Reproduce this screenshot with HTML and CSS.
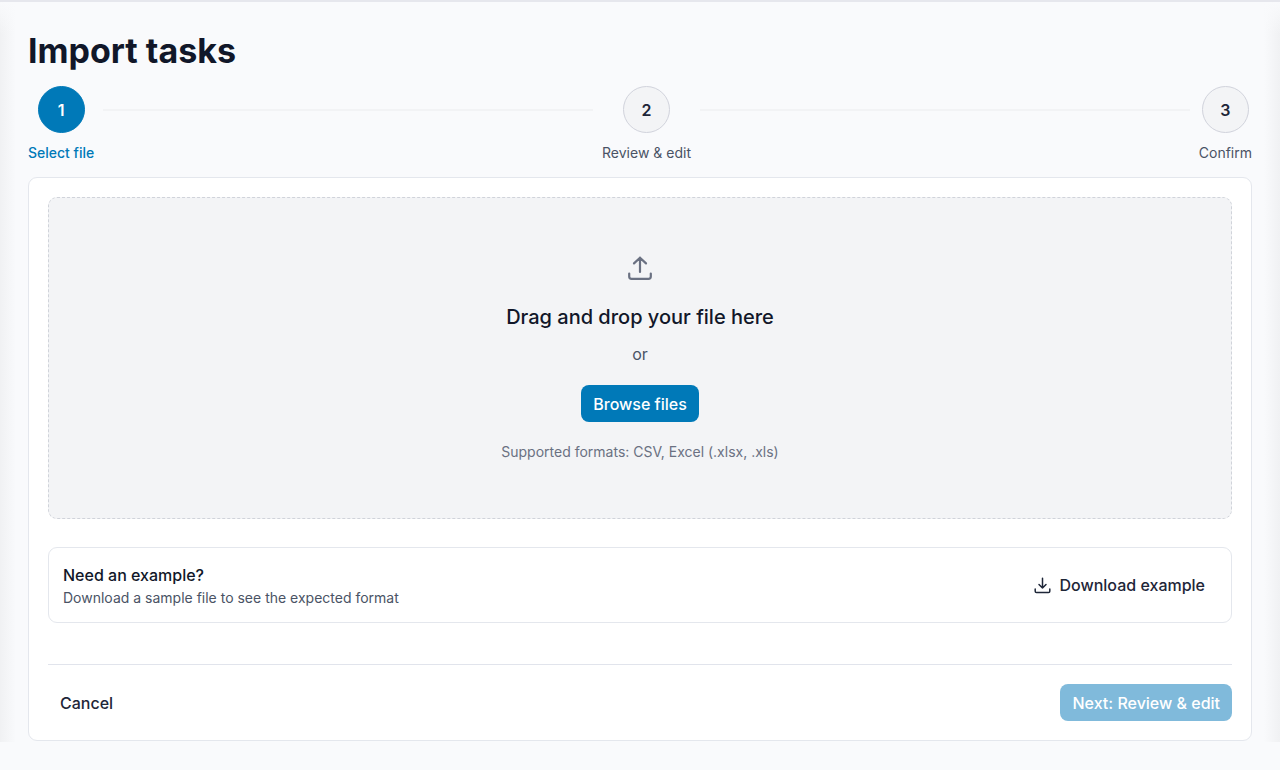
FILE: index.html
```html
<!DOCTYPE html>
<html lang="en">
<head>
<meta charset="utf-8">
<meta name="viewport" content="width=device-width, initial-scale=1">
<title>Import tasks</title>
<link rel="stylesheet" href="styles.css">
</head>
<body>
<main class="page">
  <h1 class="title">Import tasks</h1>
  <ol class="steps">
    <li class="step step-active" aria-current="step"><span class="step-number">1</span><span class="step-label">Select file</span></li>
    <li class="connector" role="presentation"></li>
    <li class="step"><span class="step-number">2</span><span class="step-label">Review &amp; edit</span></li>
    <li class="connector" role="presentation"></li>
    <li class="step"><span class="step-number">3</span><span class="step-label">Confirm</span></li>
  </ol>
  <section class="card">
    <div class="dropzone">
      <svg class="upload-icon" viewBox="0 0 28 28" aria-hidden="true"><path d="M3.200 19.500v3a2.300 2.300 0 0 0 2.300 2.300h17a2.300 2.300 0 0 0 2.300-2.300v-3M14 18V3.700M8 9.400l6-5.700 6 5.700"/></svg>
      <h2 class="drop-title">Drag and drop your file here</h2>
      <p class="drop-or">or</p>
      <button class="button button-primary" type="button">Browse files</button>
      <p class="formats">Supported formats: CSV, Excel (.xlsx, .xls)</p>
    </div>
    <div class="example">
      <div>
        <h3 class="example-title">Need an example?</h3>
        <p class="example-text">Download a sample file to see the expected format</p>
      </div>
      <button class="button button-download" type="button">
        <svg class="download-icon" viewBox="0 0 17 17" aria-hidden="true"><path d="M1.200 12v2.200a1.300 1.300 0 0 0 1.300 1.300h12a1.300 1.300 0 0 0 1.300-1.300V12M8.500 1.200v9.800M5 7.500l3.500 3.500 3.500-3.500"/></svg>
        Download example
      </button>
    </div>
    <div class="actions">
      <button class="button" type="button">Cancel</button>
      <button class="button button-primary" type="button" disabled>Next: Review &amp; edit</button>
    </div>
  </section>
</main>
</body>
</html>
```
FILE: styles.css
```css
* { box-sizing: border-box; }

body {
  margin: 0;
  background: #f9fafc;
  color: #111729;
  font-family: Inter, "Liberation Sans", sans-serif;
}

h1, h2, h3, p, ol { margin: 0; padding: 0; }

.page {
  padding: 30px 28px 1px;
  border-top: 2px solid #e6e7ed;
  background:
    linear-gradient(to bottom, #f9fafc, #f9fafc00 32px),
    linear-gradient(to right, #f0f1f3, #f9fafc00) left / 16px 100% no-repeat,
    linear-gradient(to left, #f0f1f3, #f9fafc00) right / 16px 100% no-repeat;
}

.title {
  font-size: 34px;
  line-height: 38px;
  font-weight: 700;
}

.steps {
  display: flex;
  align-items: flex-start;
  margin-top: 16px;
  list-style: none;
}

.step {
  display: flex;
  flex-direction: column;
  align-items: center;
  gap: 10px;
  color: #4a5365;
}

.step-number {
  display: flex;
  align-items: center;
  justify-content: center;
  width: 47px;
  height: 47px;
  border: 1px solid #d1d3dc;
  border-radius: 50%;
  background: #f3f4f6;
  color: #1e2638;
  font-size: 16px;
  font-weight: 600;
}

.step-label {
  font-size: 14px;
  line-height: 20px;
  white-space: nowrap;
}

.step-active { color: #0079b8; }
.step-active .step-label { font-weight: 500; }
.step-active .step-number {
  border-color: #0079b8;
  background: #0079b8;
  color: #fff;
}

.connector {
  flex: 1;
  height: 2px;
  margin: 23px 9px 0;
  background: #f2f3f5;
}

.card {
  margin-top: 14px;
  padding: 19px;
  border: 1px solid #e4e7ed;
  border-radius: 9px;
  background: #fff;
}

.dropzone {
  display: flex;
  flex-direction: column;
  align-items: center;
  padding: 56px 20px;
  border: 1px dashed #d0d3da;
  border-radius: 9px;
  background: #f3f4f6;
}

svg {
  fill: none;
  stroke: currentColor;
  stroke-linecap: round;
  stroke-linejoin: round;
}

.upload-icon {
  width: 28px;
  height: 28px;
  color: #6a7182;
  stroke-width: 2.200;
}

.drop-title {
  margin-top: 21px;
  font-size: 20px;
  line-height: 28px;
  font-weight: 500;
}

.drop-or {
  margin-top: 12px;
  color: #4a5365;
  font-size: 16px;
  line-height: 22px;
}

.button {
  display: flex;
  align-items: center;
  gap: 8px;
  height: 37px;
  padding: 0 12px;
  border: 0;
  border-radius: 8px;
  background: transparent;
  color: #1e2638;
  font: 500 16px/24px Inter, "Liberation Sans", sans-serif;
}

.button-primary { background: #0079b8; color: #fff; }
.button-primary:disabled { background: #80badb; }

.dropzone .button { margin-top: 20px; }

.formats {
  margin-top: 20px;
  color: #6a7182;
  font-size: 14px;
  line-height: 20px;
}

.example {
  display: flex;
  align-items: center;
  justify-content: space-between;
  margin-top: 28px;
  padding: 14px;
  border: 1px solid #e4e7ed;
  border-radius: 9px;
}

.example-title {
  font-size: 16px;
  line-height: 26px;
  font-weight: 500;
}

.example-text {
  color: #4a5365;
  font-size: 14px;
  line-height: 20px;
}

.download-icon {
  width: 17px;
  height: 17px;
  stroke-width: 1.500;
}

.actions {
  display: flex;
  justify-content: space-between;
  margin-top: 41px;
  padding-top: 19px;
  border-top: 1px solid #e1e4ec;
}
```
